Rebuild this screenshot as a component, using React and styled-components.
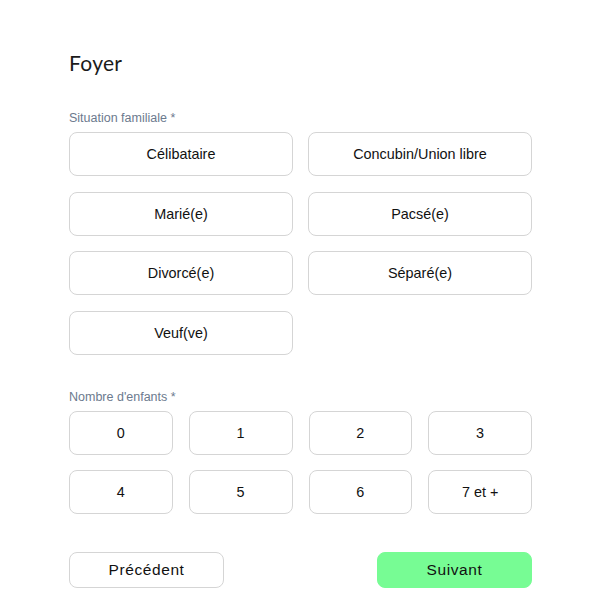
import React, { useState } from "react";
import styled, { createGlobalStyle } from "styled-components";

const GlobalStyle = createGlobalStyle`
  body {
    margin: 0;
    background: #ffffff;
    font-family: "Liberation Sans", Arial, sans-serif;
  }
`;

const Page = styled.div`
  width: 463px;
  padding: 50px 0 0 69px;
`;

const Title = styled.h1`
  margin: 0 0 35px;
  font-family: "Lato", "Inter", sans-serif;
  font-weight: 400;
  font-size: 21px;
  line-height: 25px;
  color: #1b1b1b;
  letter-spacing: 0.3px;
`;

const Label = styled.div`
  font-size: 12.5px;
  line-height: 16px;
  color: #6c7a8e;
  margin-bottom: 6px;
`;

const Section = styled.div`
  margin-bottom: ${props => props.$gap}px;
`;

const Grid = styled.div`
  display: grid;
  grid-template-columns: repeat(${props => props.$cols}, 1fr);
  column-gap: ${props => (props.$cols === 4 ? 16 : 15)}px;
  row-gap: 15.5px;
`;

const Choice = styled.button`
  height: 44px;
  border: 1px solid ${props => (props.$active ? "#6cf28c" : "#d5d5d5")};
  border-radius: 8px;
  background: ${props => (props.$active ? "#effff2" : "#ffffff")};
  font-family: "Liberation Sans", Arial, sans-serif;
  font-size: 14.4px;
  color: #111111;
  cursor: pointer;
  padding: 0;
`;

const Footer = styled.div`
  display: flex;
  justify-content: space-between;
`;

const NavButton = styled.button`
  width: 155px;
  height: 36px;
  border-radius: 8px;
  border: 1px solid ${props => (props.$primary ? "#77fc94" : "#d5d5d5")};
  background: ${props => (props.$primary ? "#77fc94" : "#ffffff")};
  font-family: "Liberation Sans", Arial, sans-serif;
  font-size: 15.5px;
  letter-spacing: 0.6px;
  color: #111111;
  cursor: pointer;
`;

const situations = [
  "Célibataire",
  "Concubin/Union libre",
  "Marié(e)",
  "Pacsé(e)",
  "Divorcé(e)",
  "Séparé(e)",
  "Veuf(ve)"
];

const enfants = ["0", "1", "2", "3", "4", "5", "6", "7 et +"];

const App = () => {
  const [situation, setSituation] = useState(null);
  const [nombre, setNombre] = useState(null);

  return (
    <Page>
      <GlobalStyle />
      <Title>Foyer</Title>

      <Section $gap={34}>
        <Label>Situation familiale *</Label>
        <Grid $cols={2}>
          {situations.map(s => (
            <Choice
              key={s}
              $active={situation === s}
              onClick={() => setSituation(s)}
            >
              {s}
            </Choice>
          ))}
        </Grid>
      </Section>

      <Section $gap={38}>
        <Label>Nombre d'enfants *</Label>
        <Grid $cols={4}>
          {enfants.map(n => (
            <Choice key={n} $active={nombre === n} onClick={() => setNombre(n)}>
              {n}
            </Choice>
          ))}
        </Grid>
      </Section>

      <Footer>
        <NavButton>Précédent</NavButton>
        <NavButton $primary>Suivant</NavButton>
      </Footer>
    </Page>
  );
};

export default App;
